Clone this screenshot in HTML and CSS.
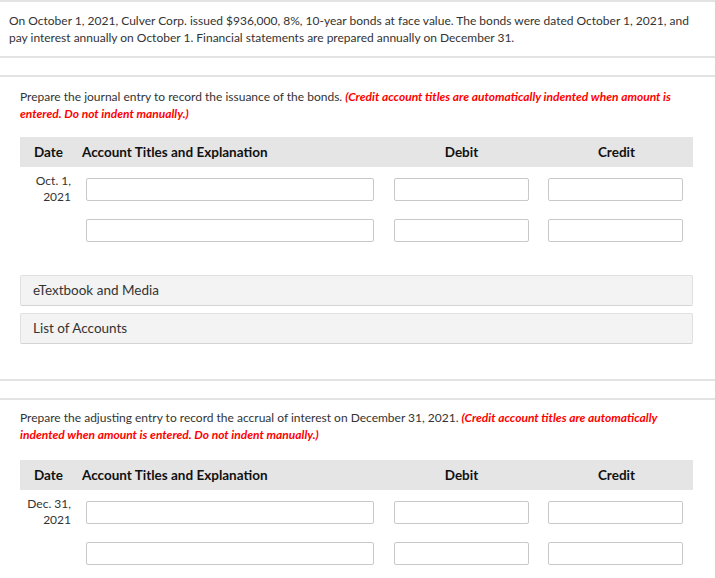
FILE: index.html
```html
<!DOCTYPE html>
<html lang="en">
<head>
<meta charset="utf-8">
<title>Bonds journal entries</title>
<link rel="stylesheet" href="styles.css">
</head>
<body>
<section class="card intro">
  <p>On October 1, 2021, Culver Corp. issued $936,000, 8%, 10-year bonds at face value. The bonds were dated October 1, 2021, and pay interest annually on October 1. Financial statements are prepared annually on December 31.</p>
</section>

<section class="card part">
  <p class="prompt">Prepare the journal entry to record the issuance of the bonds. <em class="note">(Credit account titles are automatically indented when amount is entered. Do not indent manually.)</em></p>
  <div class="thead">
    <div class="th-date">Date</div>
    <div class="th-acct">Account Titles and Explanation</div>
    <div class="th-amt">Debit</div>
    <div class="th-amt">Credit</div>
  </div>
  <div class="jrow">
    <div class="date">Oct. 1,<br>2021</div>
    <input class="inp acct" type="text">
    <input class="inp amt" type="text">
    <input class="inp amt" type="text">
  </div>
  <div class="jrow">
    <div class="date"></div>
    <input class="inp acct" type="text">
    <input class="inp amt" type="text">
    <input class="inp amt" type="text">
  </div>
  <div class="links">
    <div class="acc">eTextbook and Media</div>
    <div class="acc">List of Accounts</div>
  </div>
</section>

<section class="card part">
  <p class="prompt">Prepare the adjusting entry to record the accrual of interest on December 31, 2021. <em class="note">(Credit account titles are automatically indented when amount is entered. Do not indent manually.)</em></p>
  <div class="thead">
    <div class="th-date">Date</div>
    <div class="th-acct">Account Titles and Explanation</div>
    <div class="th-amt">Debit</div>
    <div class="th-amt">Credit</div>
  </div>
  <div class="jrow">
    <div class="date">Dec. 31,<br>2021</div>
    <input class="inp acct" type="text">
    <input class="inp amt" type="text">
    <input class="inp amt" type="text">
  </div>
  <div class="jrow">
    <div class="date"></div>
    <input class="inp acct" type="text">
    <input class="inp amt" type="text">
    <input class="inp amt" type="text">
  </div>
</section>
</body>
</html>
```
FILE: styles.css
```css
html, body {
  margin: 0;
  padding: 0;
  background: #fff;
}
body {
  font-family: Lato, "Open Sans", sans-serif;
  font-size: 12px;
  line-height: 17px;
  color: #333;
}
p { margin: 0; }

.card {
  border-top: 2px solid #e3e3e3;
  border-bottom: 2px solid #e3e3e3;
  background: #fff;
}
.intro {
  padding: 10px 9px 10px 9px;
}
.part {
  margin-top: 17px;
  padding: 11px 22px 35px 20px;
}
.part:last-child {
  padding-top: 9px;
  padding-bottom: 20px;
}
.part:last-child .thead {
  margin-top: 17px;
}

.note {
  color: #f00;
  font-weight: 700;
  font-style: italic;
}

.thead {
  margin-top: 15px;
  height: 30px;
  background: #e5e5e5;
  display: flex;
  align-items: center;
  padding-left: 14px;
  font-size: 13.5px;
  font-weight: 700;
  color: #111;
}
.th-date { width: 48px; }
.th-acct { width: 292px; }
.th-amt {
  width: 135px;
  margin-left: 20px;
  text-align: center;
}

.jrow {
  display: flex;
  align-items: flex-start;
  height: 41px;
}
.thead + .jrow { margin-top: 6px; }
.date {
  width: 51px;
  padding-right: 15px;
  text-align: right;
  line-height: 16px;
  color: #333;
}
.inp {
  box-sizing: border-box;
  height: 23px;
  margin: 5px 0 0 0;
  padding: 0 6px;
  border: 1px solid #c9c9c9;
  border-radius: 2px;
  background: #fff;
  font: inherit;
}
.acct { width: 288px; }
.amt { width: 135px; margin-left: 20px; }
.amt:last-child { margin-left: 19px; }

.links {
  margin-top: 20px;
  display: flex;
  flex-direction: column;
  gap: 7px;
}
.acc {
  box-sizing: border-box;
  height: 31px;
  padding: 6px 12px 0 12px;
  font-size: 13.5px;
  background: #f3f3f3;
  border: 1px solid #e0e0e0;
  border-bottom-color: #d3d3d3;
  border-radius: 2px;
  color: #333;
}
```
